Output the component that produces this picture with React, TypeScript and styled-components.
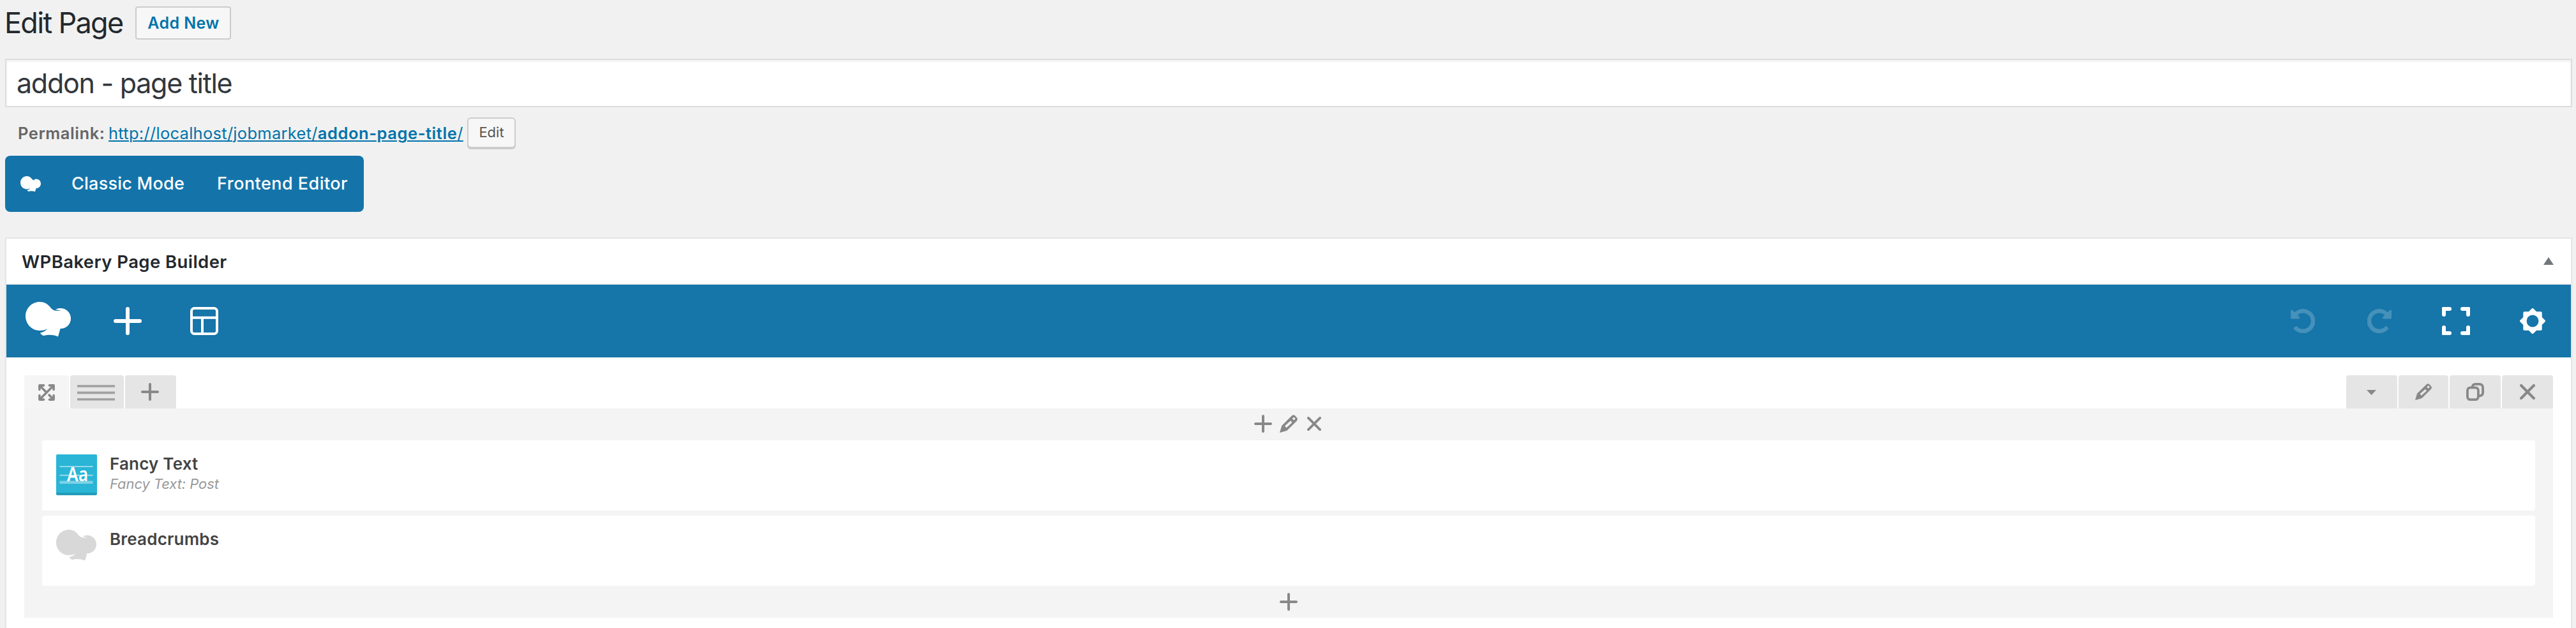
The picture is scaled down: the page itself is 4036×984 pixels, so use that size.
import React from "react";
import styled, { createGlobalStyle } from "styled-components";

const GlobalStyle = createGlobalStyle`
  *, *::before, *::after { box-sizing: border-box; }
  body {
    margin: 0;
    background: #f1f1f1;
    font-family: Inter, "Liberation Sans", sans-serif;
    color: #444;
  }
  svg { display: block; flex: none; }
`;

const Page = styled.main`
  display: flex;
  flex-direction: column;
  height: 984px;
  padding: 0 6px 0 8px;
  overflow: hidden;
`;

const Heading = styled.header`
  display: flex;
  align-items: center;
  height: 72px;
  margin-bottom: 20px;
`;

const PageTitle = styled.h1`
  width: 205px;
  margin: 0 0 0 -1px;
  font-size: 45px;
  font-weight: 400;
  line-height: 72px;
  letter-spacing: -1.69px;
  white-space: nowrap;
  color: #23282d;
`;

const AddNewButton = styled.button`
  width: 150px;
  height: 52px;
  padding: 0 0 0 1px;
  border: 2px solid #ccc;
  border-radius: 4px;
  background: #f7f7f7;
  color: #0073aa;
  font: 600 25px/48px Inter, sans-serif;
  letter-spacing: 0.38px;
`;

const TitleField = styled.div`
  height: 76px;
  padding-left: 16px;
  border: 2px solid #ddd;
  background: #fff;
  box-shadow: inset 0 2px 4px rgba(0, 0, 0, 0.07);
  color: #32373c;
  font-size: 43px;
  line-height: 72px;
  letter-spacing: -1.28px;
`;

const PermalinkRow = styled.div`
  display: flex;
  align-items: center;
  height: 48px;
  margin: 16px 0 12px;
  padding-left: 20px;
  font-size: 25.5px;
  line-height: 48px;
  white-space: nowrap;
`;

const PermalinkLabel = styled.strong`
  width: 142px;
  padding-top: 1px;
  font-weight: 600;
  letter-spacing: 0.55px;
  color: #666;
`;

const Permalink = styled.a`
  width: 556px;
  padding-top: 1px;
  color: #0073aa;
  letter-spacing: 0.28px;
  text-decoration: underline 2px;
  text-underline-offset: 2px;
`;

const Slug = styled.span`
  font-weight: 600;
  letter-spacing: 0.56px;
`;

const EditButton = styled.button`
  width: 76px;
  height: 48px;
  margin-left: 6px;
  padding: 0 0 1px;
  border: 2px solid #ccc;
  border-radius: 6px;
  background: #f7f7f7;
  box-shadow: 0 2px 0 #ccc;
  color: #555;
  font: 400 22px/43px Inter, sans-serif;
`;

const ModeSwitch = styled.nav`
  display: flex;
  align-items: center;
  width: 562px;
  height: 88px;
  padding-left: 24px;
  border-radius: 8px;
  background: #1474aa;
`;

const ModeLink = styled.a<{ $before: number; $spacing: number }>`
  margin-left: ${(p) => p.$before}px;
  color: #fff;
  font-size: 27px;
  font-weight: 500;
  line-height: 88px;
  letter-spacing: ${(p) => p.$spacing}px;
  white-space: nowrap;
`;

const Panel = styled.section`
  flex: 1;
  margin-top: 40px;
  border: 2px solid #e5e5e5;
  border-bottom: 0;
  background: #fff;
  box-shadow: 0 2px 2px rgba(0, 0, 0, 0.04);
`;

const PanelHeader = styled.div`
  display: flex;
  align-items: center;
  justify-content: space-between;
  height: 72px;
  padding: 0 27px 0 24px;
  border-bottom: 2px solid #eee;
`;

const PanelTitle = styled.h2`
  margin: 0;
  padding-top: 2px;
  color: #23282d;
  font-size: 27.5px;
  font-weight: 600;
  line-height: 68px;
  letter-spacing: 0.42px;
`;

const Toolbar = styled.div`
  display: flex;
  align-items: center;
  justify-content: space-between;
  height: 114px;
  padding: 0 40px 0 30px;
  background: #1675a9;
`;

const ToolGroup = styled.div<{ $gap: number }>`
  display: flex;
  align-items: center;
  gap: ${(p) => p.$gap}px;
`;

const LogoSlot = styled.div`
  height: 60px;
  margin-right: -9px;
`;

const Row = styled.div`
  padding: 28px 28px 0;
`;

const RowControls = styled.div`
  display: flex;
  justify-content: space-between;
  height: 52px;
`;

const Tabs = styled.div`
  display: flex;
  gap: 2px;
`;

const Tab = styled.button<{ $width: number; $active?: boolean; $inset?: string }>`
  display: flex;
  align-items: center;
  justify-content: center;
  width: ${(p) => p.$width}px;
  height: 52px;
  padding: ${(p) => p.$inset ?? "0"};
  border: 0;
  border-radius: 4px 4px 0 0;
  background: ${(p) => (p.$active ? "#f5f5f5" : "#e5e5e5")};
  color: #888;
`;

const Column = styled.div`
  height: 328px;
  padding: 0 28px;
  background: #f4f4f4;
`;

const ColumnControls = styled.div<{ $inset?: string }>`
  display: flex;
  align-items: center;
  justify-content: center;
  height: 50px;
  padding: ${(p) => p.$inset ?? "0"};
  color: #888;
`;

const ControlIcon = styled.span<{ $gap?: number }>`
  margin-left: ${(p) => p.$gap ?? 0}px;
`;

const Cards = styled.div`
  display: flex;
  flex-direction: column;
  gap: 8px;
`;

const Card = styled.article`
  display: flex;
  gap: 20px;
  height: 110px;
  padding: 22px 22px 0;
  border-radius: 4px;
  background: #fff;
`;

const CardIcon = styled.div`
  width: 64px;
  color: #d8d8d8;
`;

const CardTitle = styled.h4`
  margin: 0;
  color: #444;
  font-size: 26px;
  font-weight: 600;
  line-height: 30px;
  letter-spacing: 0.2px;
`;

const CardDetail = styled.p`
  margin: 1px 0 0;
  color: #999;
  font-size: 22px;
  font-style: italic;
  line-height: 30px;
  letter-spacing: -0.08px;
`;

const Logo = ({ width }: { width: number }) => (
  <svg width={width} height={(width * 55) / 71} viewBox="0 0 71 55" fill="currentColor">
    <path d="M22.3 0C29 0 34.5 3 38 7.5C41 11 43 14 49.5 14C52 14 54 13.7 56 13C53 13.4 50 13 47 12C49.5 10.5 52 10 55 10C64 10 71 17 71 26C71 35 64 42 54.5 42L51 54.5C46 52 38 50.5 28 53C26 52 24 50.5 23 48.5C27 47.5 31 46 34.5 42C31 44 27 45 22.3 45C10 45 0 35 0 22.5C0 10 10 0 22.3 0Z" />
  </svg>
);

const Plus = ({ size, weight }: { size: number; weight: number }) => (
  <svg width={size} height={size} viewBox={`0 0 ${size} ${size}`} fill="none" stroke="currentColor" strokeWidth={weight} strokeLinecap="round">
    <path d={`M${size / 2} ${weight / 2}V${size - weight / 2}M${weight / 2} ${size / 2}H${size - weight / 2}`} />
  </svg>
);

const Cross = ({ size }: { size: number }) => (
  <svg width={size} height={size} viewBox="0 0 24 24" fill="none" stroke="currentColor" strokeWidth="4.2" strokeLinecap="round">
    <path d="M2.1 2.1L21.9 21.9M21.9 2.1L2.1 21.9" />
  </svg>
);

const Layout = () => (
  <svg width="44" height="44" viewBox="0 0 44 44" fill="none" stroke="currentColor" strokeWidth="4">
    <rect x="2" y="2" width="40" height="40" rx="4.5" />
    <path d="M2 16.7H42M19 16.7V42" />
  </svg>
);

const Undo = ({ flip }: { flip?: boolean }) => (
  <svg width="38" height="38" viewBox="0 0 38 38" opacity="0.2">
    <g transform={flip ? "translate(38 0) scale(-1 1)" : undefined}>
      <path
        fill="#fff"
        d="M0 3C0 1.2 1.6 1 2.6 2L6.3 5.3A19 19 0 1 1 4.7 31.2C4 30.4 8.3 25.9 9.6 27.3A12.6 12.6 0 1 0 10.6 9.7L13.6 12.4C14.6 13.6 14 15.4 12.6 15.4H1.3C.5 15.4 0 15 0 14.2Z"
      />
    </g>
  </svg>
);

const Fullscreen = () => (
  <svg width="44" height="44" viewBox="0 0 44 44" fill="none" stroke="currentColor" strokeWidth="6" strokeLinecap="round" strokeLinejoin="round">
    <path d="M3 12V3H12M32 3H41V12M3 32V41H12M32 41H41V32" />
    <path strokeWidth="3" d="M1.5 4V1.5H4M40 1.5H42.5V4M1.5 40V42.5H4M40 42.5H42.5V40" />
  </svg>
);

const gearOutline = Array.from({ length: 16 }, (_, i) => {
  const radius = i % 2 ? 14 : 18.2;
  const angle = (i * Math.PI) / 8;
  return `${(20 + radius * Math.cos(angle)).toFixed(2)},${(20 + radius * Math.sin(angle)).toFixed(2)}`;
}).join(" ");

const Gear = () => (
  <svg width="40" height="40" viewBox="0 0 40 40">
    <polygon points={gearOutline} fill="#fff" stroke="#fff" strokeWidth="3.6" strokeLinejoin="round" />
    <circle cx="20" cy="20" r="9.4" fill="#1675a9" />
  </svg>
);

const Move = () => (
  <svg width="26" height="26" viewBox="0 0 26 26" fill="none" stroke="currentColor" strokeWidth="3.6" strokeLinecap="round" strokeLinejoin="round">
    <path d="M1.9 8.5V1.9H8.5M17.5 1.9H24.1V8.5M1.9 17.5V24.1H8.5M24.1 17.5V24.1H17.5" />
    <path d="M3 3L12 12M23 3L3 23M17 17L23 23" />
  </svg>
);

const Lines = () => (
  <svg width="59" height="25" viewBox="0 0 59 25" fill="none" stroke="#a0a0a0" strokeWidth="3.6">
    <path d="M0 2H59M0 12.4H59M0 22.8H59" />
  </svg>
);

const Caret = () => (
  <svg width="15" height="8" viewBox="0 0 15 8" fill="currentColor">
    <path d="M0 0H15L7.5 8Z" />
  </svg>
);

const Pencil = ({ size }: { size: number }) => (
  <svg width={size} height={size} viewBox="0 0 28 28" fill="currentColor" fillRule="evenodd">
    <path d="M0 28L3.2 17L18.8 1.5C20.5 0 22.6 0 24.1 1.3L26.8 4.2C28.3 5.8 28.2 8 26.8 9.4L11.3 24.8ZM8 17.5L10.6 20.2L19.4 12L17 9.3ZM22.2 3.9A2 2 0 1 0 22.2 7.9A2 2 0 1 0 22.2 3.9Z" />
  </svg>
);

const Copy = () => (
  <svg width="28" height="28" viewBox="0 0 28 28" fill="none" stroke="currentColor" strokeWidth="3.8">
    <rect x="1.9" y="7.4" width="17" height="18.7" rx="4.5" />
    <path d="M9.5 7C9.8 3.5 11.5 1.9 14.5 1.9H20.6C24 1.9 26.1 4 26.1 7.4V15C26.1 18.3 24 20.4 20 20.4" />
  </svg>
);

const Triangle = () => (
  <svg width="16" height="12" viewBox="0 0 16 12">
    <path d="M8 0L16 12H0Z" fill="#72777c" />
  </svg>
);

const FancyTextTile = () => (
  <svg width="64" height="64" viewBox="0 0 64 64">
    <rect width="64" height="64" rx="2.5" fill="#239cb8" />
    <path d="M0 2.5A2.5 2.5 0 0 1 2.5 0H61.5A2.5 2.5 0 0 1 64 2.5V60H0Z" fill="#2ab5d6" />
    <path d="M5.5 19H57.5M5.5 32.7H57.5" stroke="#fff" strokeOpacity="0.5" strokeWidth="2" />
    <path d="M5.5 43.8H57.5" stroke="#fff" strokeOpacity="0.4" strokeWidth="4.5" />
    <text x="17" y="42" fill="#fff" fontFamily="Noto Sans, sans-serif" fontSize="31" fontWeight="600" textLength="33" lengthAdjust="spacingAndGlyphs">Aa</text>
  </svg>
);

const White = styled.span`
  color: #fff;
`;

export default function App() {
  return (
    <>
      <GlobalStyle />
      <Page>
        <Heading>
          <PageTitle>Edit Page</PageTitle>
          <AddNewButton>Add New</AddNewButton>
        </Heading>
        <TitleField>addon - page title</TitleField>
        <PermalinkRow>
          <PermalinkLabel>Permalink:</PermalinkLabel>
          <Permalink>
            http://localhost/jobmarket/<Slug>addon-page-title</Slug>/
          </Permalink>
          <EditButton>Edit</EditButton>
        </PermalinkRow>
        <ModeSwitch>
          <White><Logo width={32} /></White>
          <ModeLink $before={48} $spacing={0.25}>Classic Mode</ModeLink>
          <ModeLink $before={51} $spacing={0.45}>Frontend Editor</ModeLink>
        </ModeSwitch>
        <Panel>
          <PanelHeader>
            <PanelTitle>WPBakery Page Builder</PanelTitle>
            <Triangle />
          </PanelHeader>
          <Toolbar>
            <White>
              <ToolGroup $gap={76}>
                <LogoSlot><Logo width={71} /></LogoSlot>
                <Plus size={44} weight={6} />
                <Layout />
              </ToolGroup>
            </White>
            <White>
              <ToolGroup $gap={79}>
                <ToolGroup $gap={82}>
                  <Undo />
                  <Undo flip />
                </ToolGroup>
                <ToolGroup $gap={78}>
                  <Fullscreen />
                  <Gear />
                </ToolGroup>
              </ToolGroup>
            </White>
          </Toolbar>
          <Row>
            <RowControls>
              <Tabs>
                <Tab $width={70} $active $inset="1px 0 0"><Move /></Tab>
                <Tab $width={84} $inset="2px 4px 0 0"><Lines /></Tab>
                <Tab $width={80} $inset="0 2px 0 0"><Plus size={28} weight={4} /></Tab>
              </Tabs>
              <Tabs>
                <Tab $width={80} $inset="2px 1px 0 0"><Caret /></Tab>
                <Tab $width={78}><Pencil size={26} /></Tab>
                <Tab $width={80}><Copy /></Tab>
                <Tab $width={80}><Cross size={24} /></Tab>
              </Tabs>
            </RowControls>
            <Column>
              <ColumnControls $inset="0 3px 2px 0">
                <ControlIcon><Plus size={28} weight={4} /></ControlIcon>
                <ControlIcon $gap={12}><Pencil size={28} /></ControlIcon>
                <ControlIcon $gap={15}><Cross size={22} /></ControlIcon>
              </ColumnControls>
              <Cards>
                <Card>
                  <CardIcon><FancyTextTile /></CardIcon>
                  <div>
                    <CardTitle>Fancy Text</CardTitle>
                    <CardDetail>Fancy Text: Post</CardDetail>
                  </div>
                </Card>
                <Card>
                  <CardIcon><Logo width={63} /></CardIcon>
                  <CardTitle>Breadcrumbs</CardTitle>
                </Card>
              </Cards>
              <ColumnControls>
                <Plus size={28} weight={4} />
              </ColumnControls>
            </Column>
          </Row>
        </Panel>
      </Page>
    </>
  );
}
